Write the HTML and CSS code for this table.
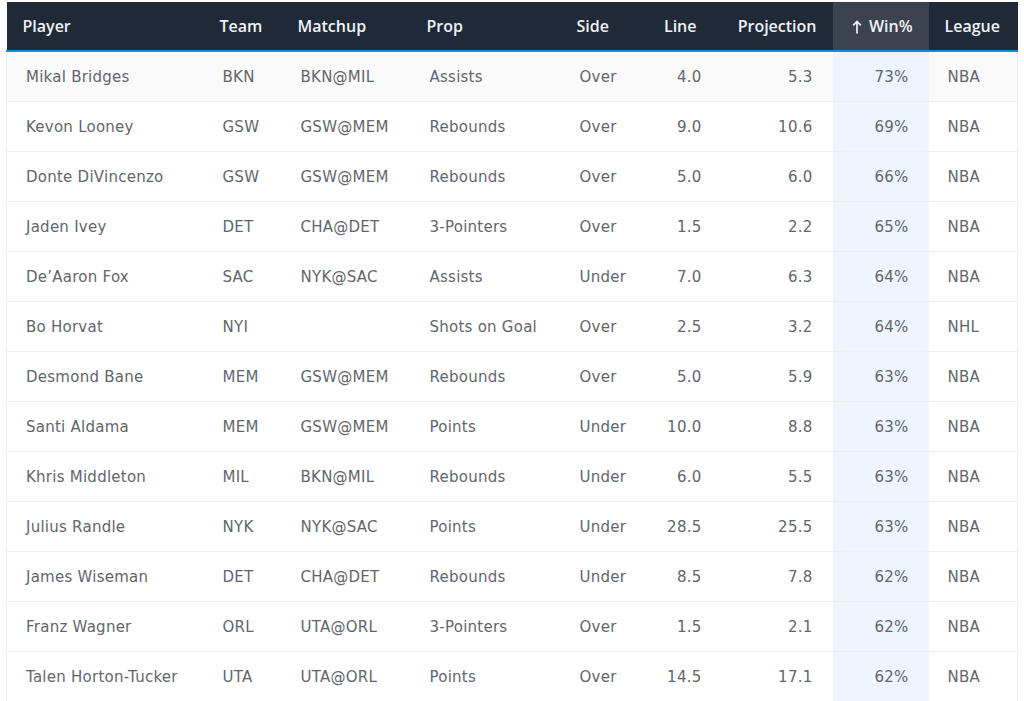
FILE: index.html
```html
<!DOCTYPE html>
<html>
<head>
<meta charset="utf-8">
<link rel="stylesheet" href="styles.css">
</head>
<body>
<table class="props">
  <colgroup>
    <col class="c-player"><col class="c-team"><col class="c-match"><col class="c-prop"><col class="c-side"><col class="c-line"><col class="c-proj"><col class="c-win"><col class="c-league">
  </colgroup>
  <thead>
    <tr>
      <th>Player</th><th>Team</th><th>Matchup</th><th>Prop</th><th>Side</th>
      <th class="num th-line">Line</th><th class="num">Projection</th>
      <th class="num sorted"><svg class="arrow" width="10" height="14" viewBox="0 0 10 14"><path d="M5 13.5V1.5M1.2 5.4L5 1.5L8.8 5.4" fill="none" stroke="currentColor" stroke-width="1.7"/></svg> Win%</th>
      <th>League</th>
    </tr>
  </thead>
  <tbody>
    <tr class="hover"><td>Mikal Bridges</td><td>BKN</td><td>BKN@MIL</td><td>Assists</td><td>Over</td><td class="num line">4.0</td><td class="num">5.3</td><td class="num win">73%</td><td>NBA</td></tr>
    <tr><td>Kevon Looney</td><td>GSW</td><td>GSW@MEM</td><td>Rebounds</td><td>Over</td><td class="num line">9.0</td><td class="num">10.6</td><td class="num win">69%</td><td>NBA</td></tr>
    <tr><td>Donte DiVincenzo</td><td>GSW</td><td>GSW@MEM</td><td>Rebounds</td><td>Over</td><td class="num line">5.0</td><td class="num">6.0</td><td class="num win">66%</td><td>NBA</td></tr>
    <tr><td>Jaden Ivey</td><td>DET</td><td>CHA@DET</td><td>3-Pointers</td><td>Over</td><td class="num line">1.5</td><td class="num">2.2</td><td class="num win">65%</td><td>NBA</td></tr>
    <tr><td>De’Aaron Fox</td><td>SAC</td><td>NYK@SAC</td><td>Assists</td><td>Under</td><td class="num line">7.0</td><td class="num">6.3</td><td class="num win">64%</td><td>NBA</td></tr>
    <tr><td>Bo Horvat</td><td>NYI</td><td></td><td>Shots on Goal</td><td>Over</td><td class="num line">2.5</td><td class="num">3.2</td><td class="num win">64%</td><td>NHL</td></tr>
    <tr><td>Desmond Bane</td><td>MEM</td><td>GSW@MEM</td><td>Rebounds</td><td>Over</td><td class="num line">5.0</td><td class="num">5.9</td><td class="num win">63%</td><td>NBA</td></tr>
    <tr><td>Santi Aldama</td><td>MEM</td><td>GSW@MEM</td><td>Points</td><td>Under</td><td class="num line">10.0</td><td class="num">8.8</td><td class="num win">63%</td><td>NBA</td></tr>
    <tr><td>Khris Middleton</td><td>MIL</td><td>BKN@MIL</td><td>Rebounds</td><td>Under</td><td class="num line">6.0</td><td class="num">5.5</td><td class="num win">63%</td><td>NBA</td></tr>
    <tr><td>Julius Randle</td><td>NYK</td><td>NYK@SAC</td><td>Points</td><td>Under</td><td class="num line">28.5</td><td class="num">25.5</td><td class="num win">63%</td><td>NBA</td></tr>
    <tr><td>James Wiseman</td><td>DET</td><td>CHA@DET</td><td>Rebounds</td><td>Under</td><td class="num line">8.5</td><td class="num">7.8</td><td class="num win">62%</td><td>NBA</td></tr>
    <tr><td>Franz Wagner</td><td>ORL</td><td>UTA@ORL</td><td>3-Pointers</td><td>Over</td><td class="num line">1.5</td><td class="num">2.1</td><td class="num win">62%</td><td>NBA</td></tr>
    <tr><td>Talen Horton-Tucker</td><td>UTA</td><td>UTA@ORL</td><td>Points</td><td>Over</td><td class="num line">14.5</td><td class="num">17.1</td><td class="num win">62%</td><td>NBA</td></tr>
  </tbody>
</table>
</body>
</html>
```

FILE: styles.css
```css
html, body {
  margin: 0;
  padding: 0;
  background: #ffffff;
}

.props {
  margin: 2px 0 0 6px;
  width: 1011px;
  table-layout: fixed;
  border-collapse: collapse;
  font-family: "DejaVu Sans", Verdana, sans-serif;
}

.c-player { width: 197px; }
.c-team { width: 78px; }
.c-match { width: 129px; }
.c-prop { width: 150px; }
.c-side { width: 79px; }
.c-line { width: 80px; }
.c-proj { width: 113px; }
.c-win { width: 96px; }
.c-league { width: 89px; }

.props th {
  height: 48px;
  padding: 0 16px;
  background: #1f2937;
  color: #f0f2f5;
  font-family: "Open Sans", "Noto Sans", sans-serif;
  font-size: 16px;
  font-weight: 600;
  text-align: left;
  white-space: nowrap;
  border-bottom: 2px solid #1a8ccf;
}

.props th.sorted {
  background: #3b4351;
}

.props th.num { text-align: right; }
.props th.th-line { padding-right: 23px; }

.arrow {
  vertical-align: -2px;
  margin-right: 3px;
}

.props td {
  height: 49px;
  padding: 0 20px 0 19px;
  color: #62666c;
  font-size: 15px;
  letter-spacing: 0.25px;
  white-space: nowrap;
  border-bottom: 1px solid #eeeeee;
}

.props tbody tr td:first-child { border-left: 1px solid #eeeeee; }
.props tbody tr td:last-child { border-right: 1px solid #eeeeee; }

.props td.num { text-align: right; }
.props td.line { padding-right: 18px; }
.props td.win { background: #eef5fe; }

.props tr.hover td { background: #fafafa; }
.props tr.hover td.win { background: #edf4fd; }
```
